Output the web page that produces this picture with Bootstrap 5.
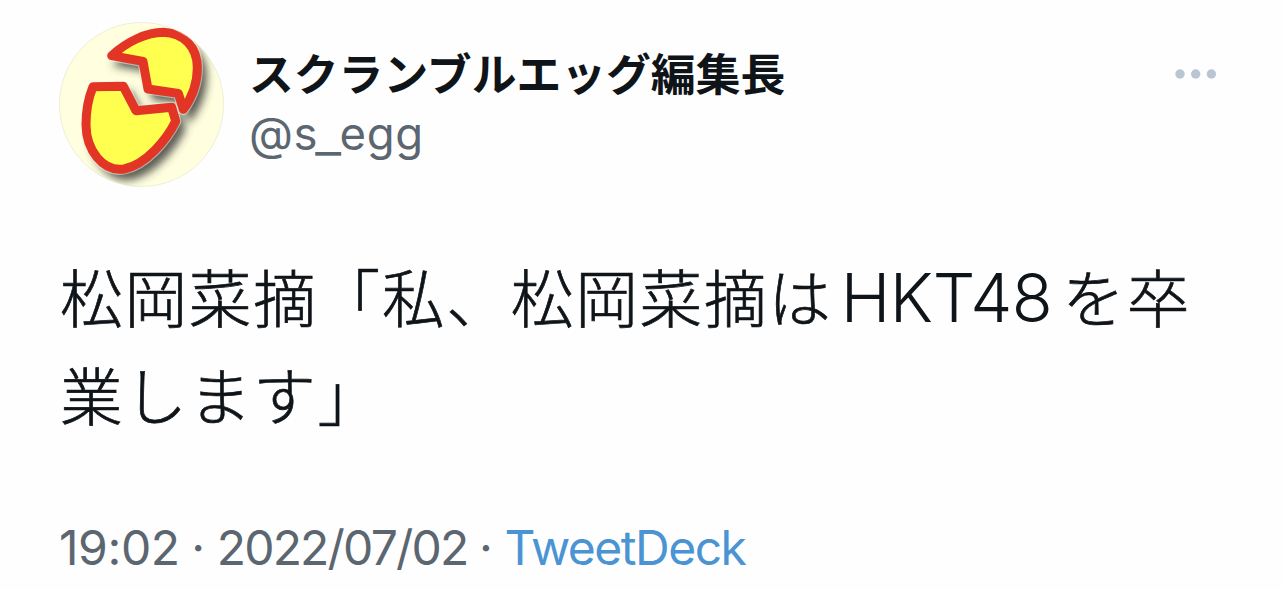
<!DOCTYPE html>
<html lang="ja">
<head>
  <meta charset="UTF-8" />
  <meta name="viewport" content="width=device-width, initial-scale=1.0" />
  <title>スクランブルエッグ編集長</title>
  <link href="https://cdn.jsdelivr.net/npm/bootstrap@5.3.3/dist/css/bootstrap.min.css" rel="stylesheet" />
  <style>
    body {
      background-color: #fefefe;
      color: #0f1419;
      font-family: Inter, "Noto Sans CJK JP", sans-serif;
      overflow: hidden;
    }
    .tweet {
      padding: 22px 64px 0 59px;
    }
    .avatar {
      width: 165px;
      height: 165px;
    }
    .names {
      margin-left: 25px;
      padding-top: 22px;
    }
    .display-name {
      font-family: "Noto Sans CJK JP", sans-serif;
      font-size: 44.8px;
      line-height: 56px;
    }
    .handle {
      font-size: 45.5px;
      line-height: 60px;
      letter-spacing: .6px;
      margin-top: 4px;
      color: #5b6670;
    }
    .underscore {
      display: inline-block;
      transform: translateY(2px) scaleX(1.25);
    }
    .more {
      width: 44px;
      height: 12px;
      margin-top: 46px;
    }
    .tweet-text {
      font-family: "Noto Sans CJK JP", sans-serif;
      font-size: 62.6px;
      font-weight: 300;
      line-height: 98px;
      letter-spacing: 1.8px;
      margin-top: 59px;
      padding-left: 1px;
      -webkit-text-stroke: .7px currentColor;
    }
    .group-name {
      font-family: Inter, sans-serif;
      font-size: 67px;
      line-height: 1;
      letter-spacing: -.5px;
      margin: 0 10px 0 8px;
      -webkit-text-stroke: 0;
    }
    .meta {
      font-size: 48px;
      line-height: 60px;
      margin-top: 76px;
      color: #5b6670;
    }
    .time {
      letter-spacing: -.4px;
    }
    .dot {
      width: 37px;
      text-align: center;
    }
    .date {
      letter-spacing: -1.8px;
    }
    .source {
      letter-spacing: -1.5px;
      color: #4a94d3;
    }
  </style>
</head>
<body>
  <article class="tweet">
    <header class="d-flex align-items-start">
      <svg class="avatar flex-shrink-0" viewBox="27 21 495 495" aria-hidden="true">
        <defs>
          <clipPath id="round"><circle cx="274.500" cy="268.500" r="247" /></clipPath>
          <filter id="shade" x="-30%" y="-30%" width="160%" height="160%">
            <feGaussianBlur stdDeviation="13" />
          </filter>
          <path id="eggTop" d="M185 122C230 80 290 52 340 52C403 54 442 98 442 158C442 212 424 250 400 283L385 235L294 222L279 139Z" />
          <path id="eggBottom" d="M129 215L220 214L258 287L365 277L377 319C350 374 288 449 222 462C158 471 109 405 108 330C108 285 116 246 129 215Z" />
        </defs>
        <g clip-path="url(#round)">
          <rect x="27" y="21" width="495" height="495" fill="#ffffdf" />
          <g transform="translate(20 24)" filter="url(#shade)" fill="#333" stroke="#333" stroke-width="18" opacity=".8">
            <use href="#eggTop" />
            <use href="#eggBottom" />
          </g>
          <g fill="none" stroke="#f5f5e6" stroke-width="34" stroke-linejoin="round" opacity=".5">
            <use href="#eggTop" />
            <use href="#eggBottom" />
          </g>
          <g fill="#ffff4f" stroke="#e23526" stroke-width="27" stroke-linejoin="round">
            <use href="#eggTop" />
            <use href="#eggBottom" />
          </g>
        </g>
        <circle cx="274.500" cy="268.500" r="246" fill="none" stroke="#e5e5d2" stroke-width="2" />
      </svg>
      <div class="names">
        <div class="display-name fw-bold text-nowrap">スクランブルエッグ編集長</div>
        <div class="handle">@s<span class="underscore">_</span>egg</div>
      </div>
      <svg class="more ms-auto" viewBox="0 0 44 12" fill="#b9c6d2" aria-label="More">
        <circle cx="6" cy="6" r="4.700" />
        <circle cx="21.700" cy="6" r="4.700" />
        <circle cx="37.400" cy="6" r="4.700" />
      </svg>
    </header>

    <p class="tweet-text text-nowrap mb-0">松岡菜摘「私、松岡菜摘は<span class="group-name">HKT48</span>を卒<br />業します」</p>

    <div class="meta d-flex text-nowrap">
      <span class="time">19:02</span>
      <span class="dot">·</span>
      <span class="date">2022/07/02</span>
      <span class="dot">·</span>
      <span class="source">TweetDeck</span>
    </div>
  </article>

  <script src="https://cdn.jsdelivr.net/npm/bootstrap@5.3.3/dist/js/bootstrap.bundle.min.js"></script>
</body>
</html>
